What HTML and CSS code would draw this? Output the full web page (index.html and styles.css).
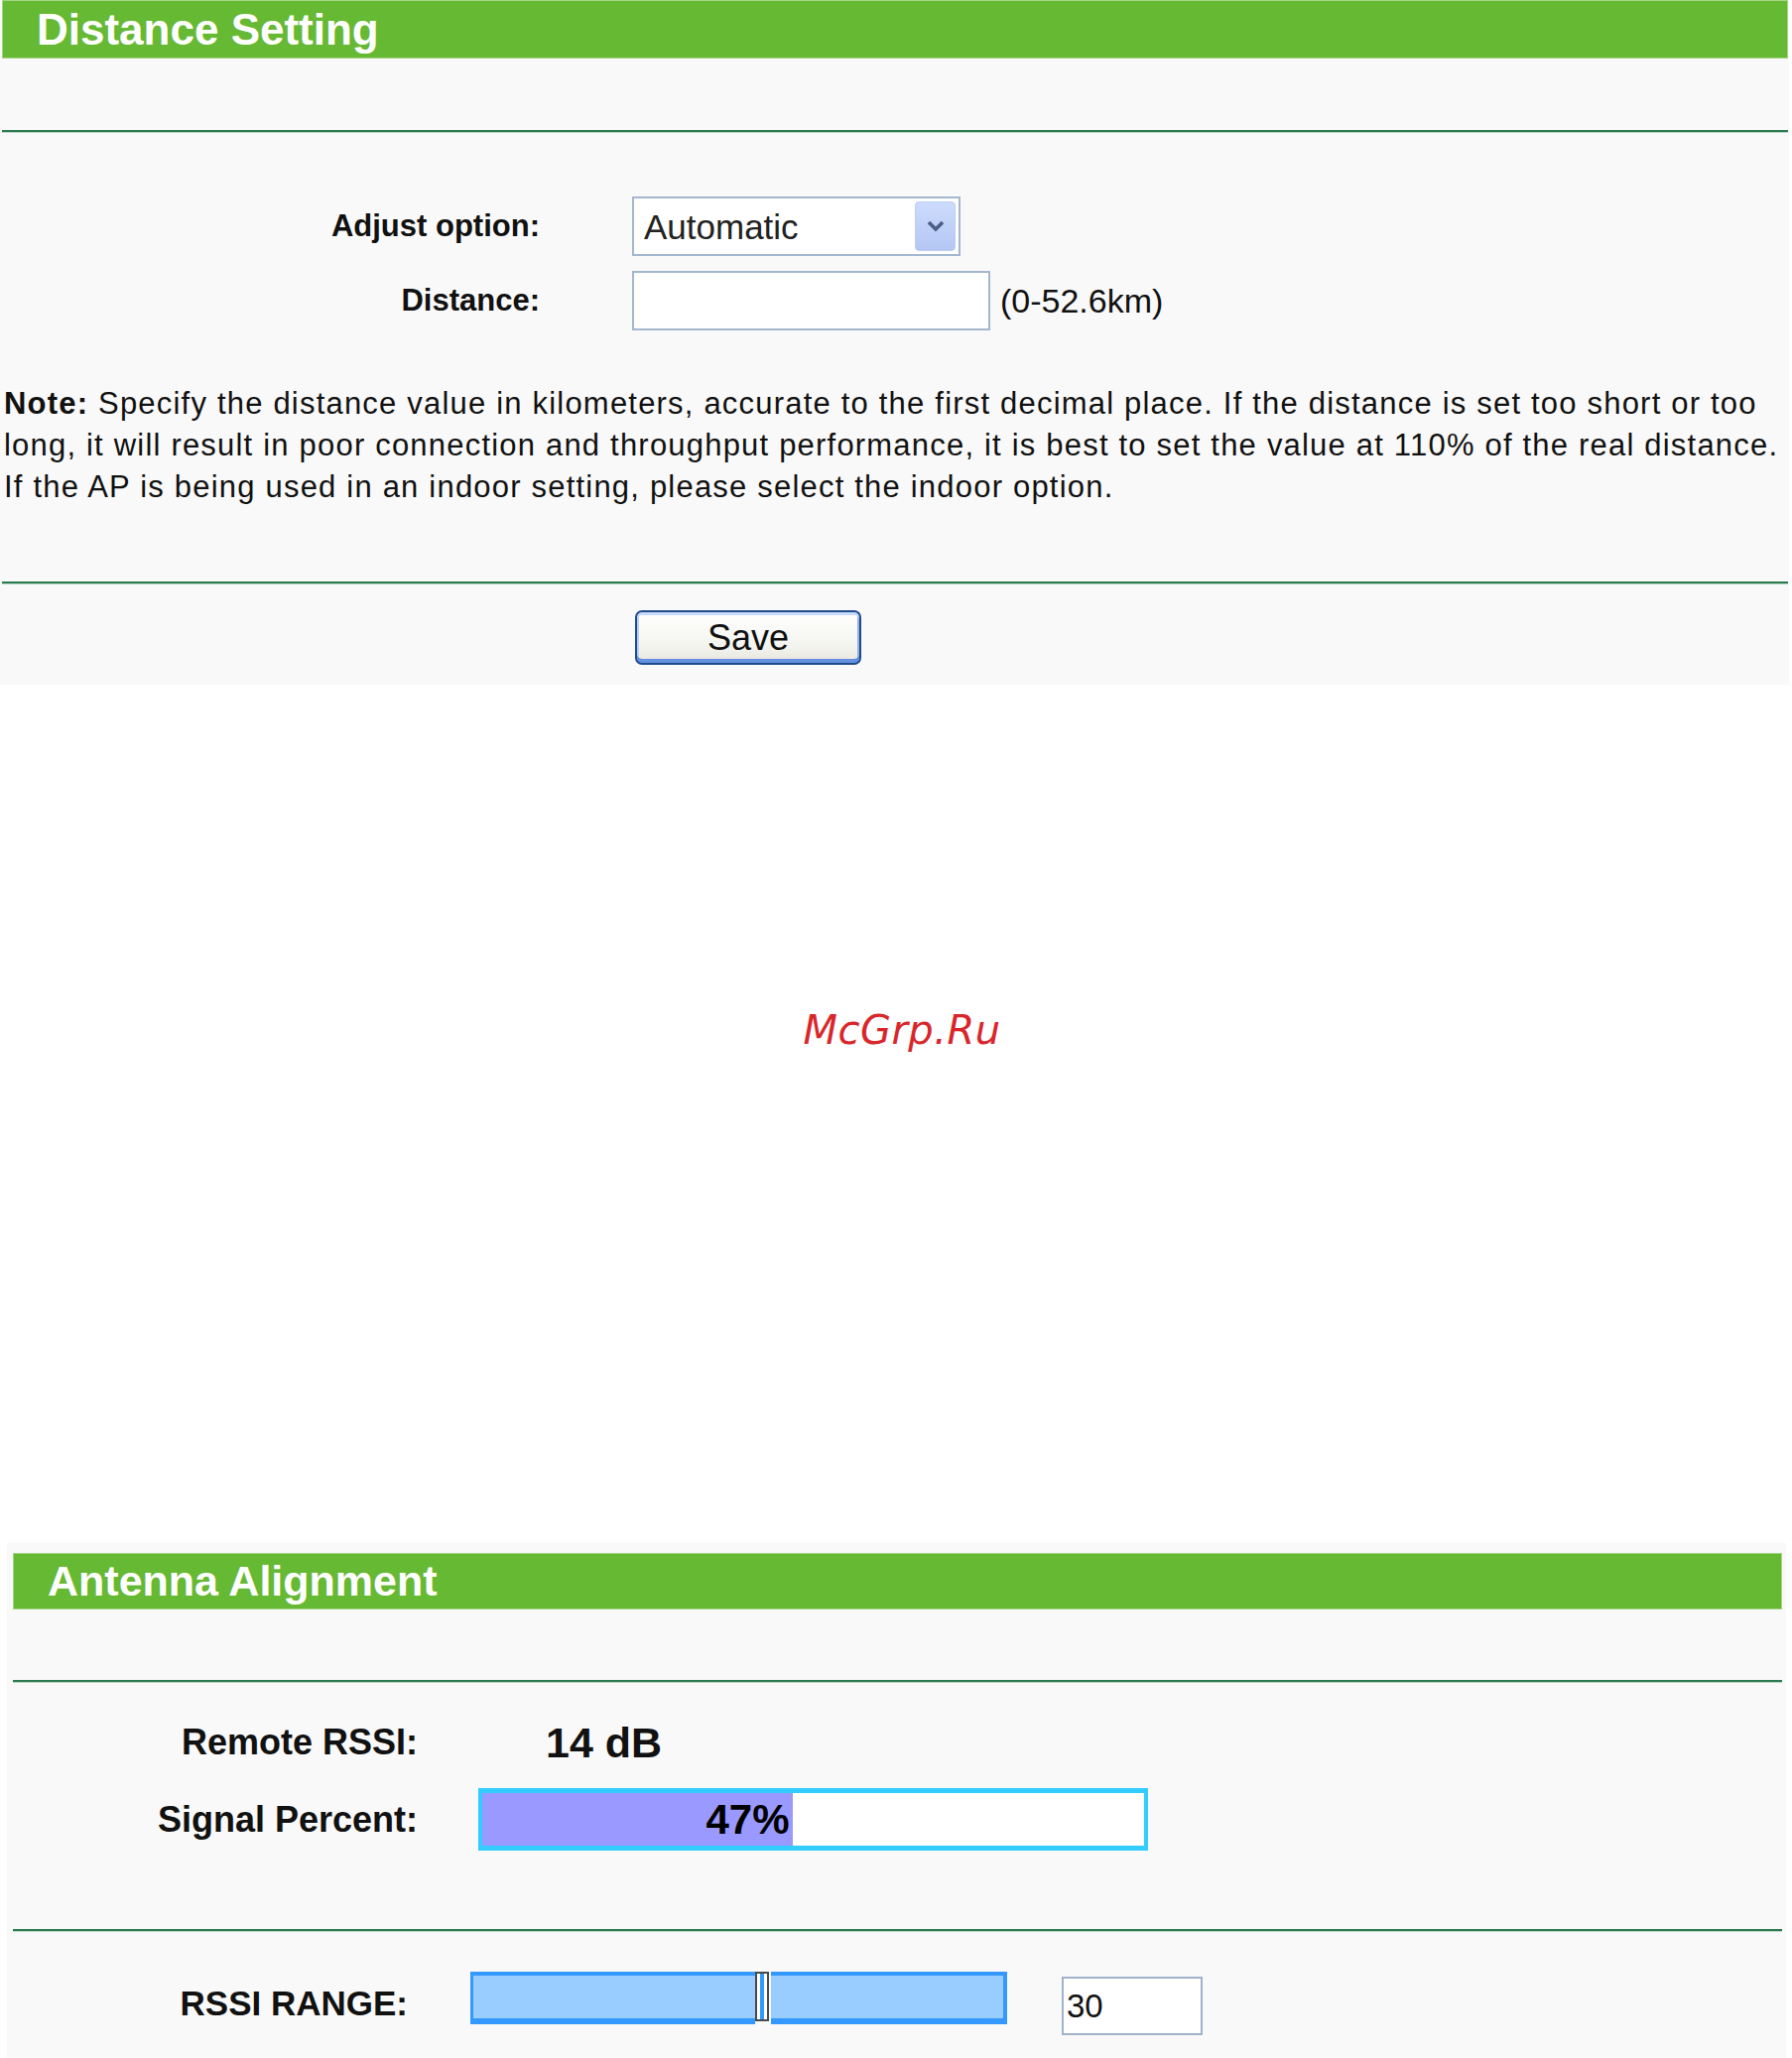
FILE: index.html
```html
<!DOCTYPE html>
<html lang="en">
<head>
  <meta charset="UTF-8">
  <title>Wireless Advanced</title>
  <link rel="stylesheet" href="styles.css">
</head>

<body>
  <div class="panel panel-distance">
    <div class="title-bar">Distance Setting</div>
    <div class="rule"></div>

    <form class="form-table" id="distance-form">
      <label class="form-label" for="adjust">Adjust option:</label>
      <div class="select-wrap">
        <select id="adjust" name="adjust" class="select">
          <option>Automatic</option>
          <option>Manual</option>
          <option>Indoor</option>
        </select>
        <span class="select-arrow">
          <svg width="20" height="14" viewBox="0 0 20 14">
            <path d="M3 3 L10 10 L17 3" fill="none" stroke="#4a5e86" stroke-width="3.6"/>
          </svg>
        </span>
      </div>

      <label class="form-label" for="distance">Distance:</label>
      <div class="field">
        <input type="text" id="distance" name="distance" class="text-input">
        <span class="hint">(0-52.6km)</span>
      </div>
    </form>

    <p class="note">
      <b>Note:</b> Specify the distance value in kilometers, accurate to the first decimal place. If the distance is set too short or too<br>
      long, it will result in poor connection and throughput performance, it is best to set the value at 110% of the real distance.<br>
      If the AP is being used in an indoor setting, please select the indoor option.
    </p>

    <div class="rule"></div>
    <div class="actions">
      <button type="submit" form="distance-form" class="btn">Save</button>
    </div>
  </div>

  <div class="gap">
    <span class="mark">McGrp.Ru</span>
  </div>

  <div class="panel panel-antenna">
    <div class="title-bar">Antenna Alignment</div>
    <div class="rule"></div>

    <div class="info-table">
      <div class="info-label">Remote RSSI:</div>
      <div class="info-value">14 dB</div>

      <div class="info-label">Signal Percent:</div>
      <div class="meter">
        <div class="meter-fill" style="width: 47%;">47%</div>
      </div>
    </div>

    <div class="rule rule-low"></div>

    <div class="range-table">
      <div class="info-label range-label">RSSI RANGE:</div>
      <div class="range-controls">
        <div class="slider">
          <span class="slider-track slider-left"></span>
          <span class="slider-thumb"></span>
          <span class="slider-track slider-right"></span>
        </div>
        <input type="text" class="range-input" value="30">
      </div>
    </div>
  </div>
</body>
</html>
```

FILE: styles.css
```css
body {
  margin: 0;
  padding: 0;
  background: #ffffff;
  font-family: 'Liberation Sans', Arial, sans-serif;
  color: #111111;
}

.panel {
  background: #f9f9f9;
}

.panel-distance {
  width: 1800px;
  padding: 0 1px 20px 2px;
}

.panel-antenna {
  width: 1783px;
  margin-left: 7px;
  padding: 10px 4px 23px 6px;
}

.title-bar {
  box-sizing: border-box;
  height: 59px;
  line-height: 57px;
  padding-left: 34px;
  background: #66b933;
  border: 1px solid #a5d584;
  color: #ffffff;
  font-size: 44px;
  font-weight: bold;
}

.panel-antenna .title-bar {
  height: 57px;
  line-height: 55px;
  font-size: 43px;
}

.rule {
  height: 2px;
  margin-top: 72px;
  background: #2f7b51;
  border-bottom: 1px solid #b9d5c4;
}

.panel-antenna .rule {
  margin-top: 71px;
}

.panel-antenna .rule-low {
  margin-top: 79px;
}

/* distance form */

.form-table {
  display: grid;
  grid-template-columns: 542px auto;
  column-gap: 93px;
  row-gap: 15px;
  align-items: center;
  margin: 64px 0 0;
}

.form-label {
  text-align: right;
  font-size: 31px;
  font-weight: bold;
}

.select-wrap {
  position: relative;
  width: 331px;
  height: 60px;
}

.select {
  box-sizing: border-box;
  width: 331px;
  height: 60px;
  margin: 0;
  padding: 0 0 0 10px;
  border: 2px solid #a3b7cf;
  border-radius: 0;
  background: #ffffff;
  font-family: inherit;
  font-size: 35px;
  color: #222222;
  appearance: none;
  -webkit-appearance: none;
}

.select-arrow {
  position: absolute;
  top: 5px;
  right: 5px;
  box-sizing: border-box;
  width: 41px;
  height: 50px;
  display: flex;
  align-items: center;
  justify-content: center;
  background: linear-gradient(#cddcfd, #b3c6f4);
  border: 1px solid #bccdf0;
  border-radius: 4px;
  pointer-events: none;
}

.field {
  display: flex;
  align-items: center;
}

.text-input {
  box-sizing: border-box;
  width: 361px;
  height: 60px;
  margin: 0;
  border: 2px solid #a3b7cf;
  background: #ffffff;
  font-family: inherit;
  font-size: 33px;
}

.hint {
  margin-left: 10px;
  font-size: 34px;
}

.note {
  margin: 53px 0 0;
  padding-left: 2px;
  font-size: 31px;
  line-height: 42px;
  letter-spacing: 1.2px;
  white-space: nowrap;
}

.panel-distance .rule + .actions {
  margin-top: 26px;
}

.panel-distance .note + .rule {
  margin-top: 74px;
}

.actions {
  padding-left: 638px;
}

.btn {
  box-sizing: border-box;
  width: 228px;
  height: 55px;
  margin: 0;
  padding: 0;
  border: 2px solid #1f4a8c;
  border-radius: 7px;
  background: linear-gradient(#ffffff, #f3f3ee 70%, #e6e5dc);
  box-shadow: inset 0 3px 0 #c8dbf8, inset 0 -4px 0 #6590df, inset 2px 0 0 #b8cff3, inset -2px 0 0 #93b3ea;
  font-family: inherit;
  font-size: 36px;
  color: #111111;
}

/* white strip between the two panels */

.gap {
  height: 865px;
  box-sizing: border-box;
  padding-top: 328px;
  padding-left: 12px;
  text-align: center;
}

.mark {
  font-family: 'DejaVu Sans', sans-serif;
  font-style: italic;
  font-size: 40px;
  line-height: 40px;
  letter-spacing: 0.5px;
  color: #d9262b;
}

/* antenna alignment */

.info-table {
  display: grid;
  grid-template-columns: 408px auto;
  column-gap: 61px;
  grid-template-rows: 60px 63px;
  row-gap: 16px;
  align-items: center;
  margin-top: 30px;
}

.info-label {
  text-align: right;
  font-size: 36px;
  font-weight: bold;
}

.info-value {
  padding-left: 68px;
  font-size: 43px;
  font-weight: bold;
}

.meter {
  box-sizing: border-box;
  width: 675px;
  height: 63px;
  border-style: solid;
  border-color: #33ccff;
  border-width: 5px 4px;
  background: #ffffff;
}

.meter-fill {
  box-sizing: border-box;
  height: 100%;
  padding-right: 4px;
  background: #9999ff;
  text-align: right;
  font-size: 42px;
  font-weight: bold;
  line-height: 53px;
  color: #000000;
}

.range-table {
  display: grid;
  grid-template-columns: 398px auto;
  column-gap: 63px;
  margin-top: 40px;
}

.range-label {
  padding-top: 5px;
  line-height: 53px;
  font-size: 35px;
}

.range-controls {
  display: flex;
  align-items: flex-start;
  gap: 55px;
}

.slider {
  display: flex;
  width: 541px;
  height: 53px;
}

.slider-track {
  box-sizing: border-box;
  height: 53px;
  background: #99ccff;
  border-color: #3399ff;
  border-style: solid;
  border-width: 4px 0 6px;
}

.slider-left {
  width: 287px;
  border-left-width: 3px;
}

.slider-right {
  width: 238px;
  margin-left: 2px;
  border-right-width: 4px;
}

.slider-thumb {
  box-sizing: border-box;
  width: 14px;
  height: 50px;
  border: 2px solid #4a4a4a;
  background: linear-gradient(to right, #ffffff 35%, #3399ff 35%, #3399ff 75%, #ffffff 75%);
}

.range-input {
  box-sizing: border-box;
  width: 142px;
  height: 59px;
  margin: 5px 0 0;
  padding: 0 0 0 3px;
  border: 2px solid #9fb3cb;
  background: #ffffff;
  font-family: inherit;
  font-size: 33px;
  color: #111111;
}
```
